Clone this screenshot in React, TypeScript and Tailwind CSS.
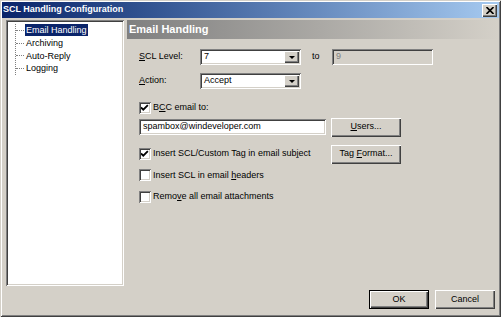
import { ReactNode } from "react";

const sunken =
  "shadow-[inset_1px_1px_0_#808080,inset_-1px_-1px_0_#ffffff,inset_2px_2px_0_#404040,inset_-2px_-2px_0_#d4d0c8]";
const raised =
  "shadow-[inset_1px_1px_0_#ffffff,inset_-1px_-1px_0_#404040,inset_-2px_-2px_0_#808080]";

function Combo({ value }: { value: string }) {
  return (
    <div className={`flex items-center w-[101px] h-[16px] bg-white ${sunken} pl-[4px] pr-[2px]`}>
      <span className="flex-1 text-black">{value}</span>
      <div className={`flex items-center justify-center w-[15px] h-[12px] bg-[#d4d0c8] ${raised}`}>
        <div className="w-0 h-0 border-l-[3px] border-r-[3px] border-t-[3px] border-l-transparent border-r-transparent border-t-black" />
      </div>
    </div>
  );
}

function Button({ children, w, def }: { children: ReactNode; w: string; def?: boolean }) {
  return (
    <div
      className={`flex items-center justify-center h-[19px] ${w} bg-[#d4d0c8] text-black ${
        def
          ? "shadow-[inset_1px_1px_0_#000,inset_-1px_-1px_0_#000,inset_2px_2px_0_#ffffff,inset_-2px_-2px_0_#404040,inset_-3px_-3px_0_#808080]"
          : raised
      }`}
    >
      <span>{children}</span>
    </div>
  );
}

function Check({ checked, children }: { checked?: boolean; children: ReactNode }) {
  return (
    <div className="flex items-center gap-[2px]">
      <div className={`flex items-center justify-center w-[12px] h-[12px] bg-white ${sunken}`}>
        {checked && (
          <svg width="8" height="8" viewBox="0 0 7 7">
            <path d="M0 3 L2 5 L6 1" stroke="#000" strokeWidth="1.6" fill="none" />
          </svg>
        )}
      </div>
      <span>{children}</span>
    </div>
  );
}

function TreeItem({ label, selected }: { label: string; selected?: boolean }) {
  return (
    <div className="flex items-center h-[12.7px]">
      <div className="w-[8px] border-t border-dotted border-[#808080]" />
      <span className={`ml-[1px] px-[1px] leading-[12px] ${selected ? "bg-[#0a246a] text-white" : "text-black"}`}>{label}</span>
    </div>
  );
}

export default function App() {
  return (
    <div className="w-[501px] h-[317px] bg-[#d4d0c8] flex flex-col font-['Liberation_Sans',Arial,sans-serif] text-[9px] text-black shadow-[inset_1px_1px_0_#d4d0c8,inset_-1px_-1px_0_#404040,inset_2px_2px_0_#ffffff,inset_-2px_-2px_0_#808080] p-[2px] overflow-hidden">
      <div className="flex items-center h-[16px] bg-gradient-to-r from-[#0a246a] to-[#a6caf0] pl-[1px] pr-[2px]">
        <span className="flex-1 text-white font-bold text-[9px]">SCL Handling Configuration</span>
        <div className={`flex items-center justify-center w-[15px] h-[13px] bg-[#d4d0c8] ${raised}`}>
          <svg width="8" height="7" viewBox="0 0 8 7">
            <path d="M0.5 0 L7.5 7 M7.5 0 L0.5 7" stroke="#000" strokeWidth="1.6" />
          </svg>
        </div>
      </div>

      <div className="flex flex-1 pt-[2px] pl-[4px]">
        <div className={`w-[118px] h-[266px] bg-white ${sunken} pl-[9px] pt-[4px]`}>
          <div className="border-l border-dotted border-[#808080]">
            <TreeItem label="Email Handling" selected />
            <TreeItem label="Archiving" />
            <TreeItem label="Auto-Reply" />
            <TreeItem label="Logging" />
          </div>
        </div>

        <div className="flex flex-col flex-1 ml-[3px] pr-[1px]">
          <div className="flex items-center h-[19px] bg-gradient-to-r from-[#808080] to-[#d4d0c8] pl-[2px]">
            <span className="text-white font-bold text-[11px]">Email Handling</span>
          </div>

          <div className="flex flex-col pl-[12px] pt-[10px]">
            <div className="flex items-center">
              <span className="w-[61px]">
                <u>S</u>CL Level:
              </span>
              <Combo value="7" />
              <span className="ml-[11px] w-[20px]">to</span>
              <div className={`flex items-center w-[101px] h-[16px] bg-[#d4d0c8] ${sunken} pl-[4px] text-[#808080]`}>9</div>
            </div>

            <div className="flex items-center mt-[8px]">
              <span className="w-[61px]">
                <u>A</u>ction:
              </span>
              <Combo value="Accept" />
            </div>

            <div className="mt-[12px]">
              <Check checked>
                B<u>C</u>C email to:
              </Check>
            </div>

            <div className="flex items-center mt-[3px]">
              <div className={`flex items-center w-[187px] h-[16px] bg-white ${sunken} pl-[4px]`}>spambox@windeveloper.com</div>
              <div className="ml-[5px]">
                <Button w="w-[70px]">
                  <u>U</u>sers...
                </Button>
              </div>
            </div>

            <div className="flex items-center mt-[8px]">
              <div className="w-[192px]">
                <Check checked>
                  Insert SCL/Custom Tag in email sub<u>j</u>ect
                </Check>
              </div>
              <Button w="w-[70px]">
                Tag <u>F</u>ormat...
              </Button>
            </div>

            <div className="mt-[5px]">
              <Check>
                Insert SCL in email <u>h</u>eaders
              </Check>
            </div>

            <div className="mt-[8px]">
              <Check>
                Remo<u>v</u>e all email attachments
              </Check>
            </div>
          </div>

          <div className="flex justify-end gap-[6px] mt-auto pb-[6px] pr-[3px]">
            <Button w="w-[60px]" def>
              OK
            </Button>
            <Button w="w-[60px]">Cancel</Button>
          </div>
        </div>
      </div>
    </div>
  );
}
